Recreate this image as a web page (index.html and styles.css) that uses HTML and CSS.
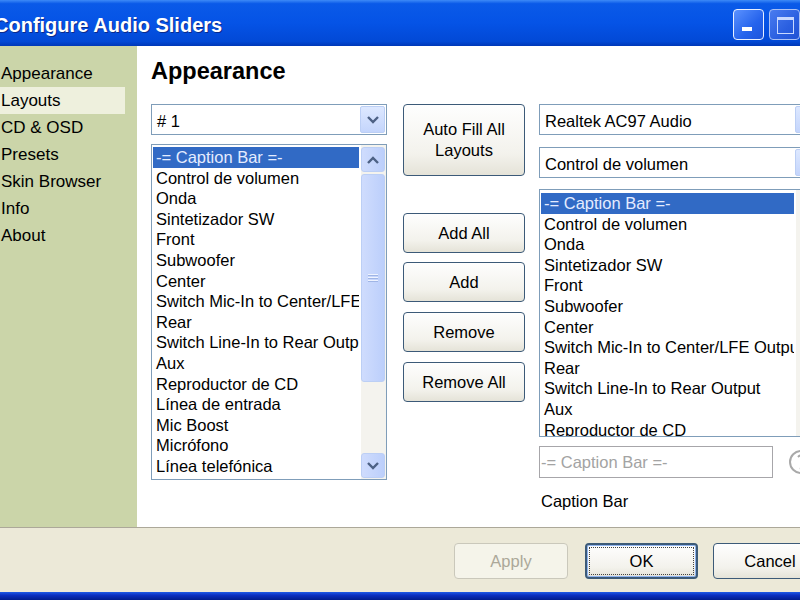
FILE: index.html
```html
<!DOCTYPE html>
<html lang="en">
<head>
    <meta charset="UTF-8">
    <title>Configure Audio Sliders</title>
    <link rel="stylesheet" href="styles.css">
</head>
<body>
    <div class="window">
        <div class="titlebar">
            <span class="title">Configure Audio Sliders</span>
            <div class="title-buttons">
                <span class="tb-btn tb-min"><span class="min-bar"></span></span>
                <span class="tb-btn tb-max"><span class="max-box"></span></span>
            </div>
        </div>

        <div class="main">
            <ul class="sidebar">
                <li>Appearance</li>
                <li class="active">Layouts</li>
                <li>CD &amp; OSD</li>
                <li>Presets</li>
                <li>Skin Browser</li>
                <li>Info</li>
                <li>About</li>
            </ul>

            <div class="content">
                <h1>Appearance</h1>

                <div class="columns">
                    <div class="col-left">
                        <div class="combo">
                            <span class="combo-text"># 1</span>
                            <span class="combo-btn">
                                <svg width="14" height="10" viewBox="0 0 14 10"><path d="M2 2 L7 7 L12 2" fill="none" stroke="#4d6185" stroke-width="2.4"/></svg>
                            </span>
                        </div>
                        <div class="listbox list-left">
                            <ul class="items">
                                <li class="selected">-= Caption Bar =-</li>
                                <li>Control de volumen</li>
                                <li>Onda</li>
                                <li>Sintetizador SW</li>
                                <li>Front</li>
                                <li>Subwoofer</li>
                                <li>Center</li>
                                <li>Switch Mic-In to Center/LFE Output</li>
                                <li>Rear</li>
                                <li>Switch Line-In to Rear Output</li>
                                <li>Aux</li>
                                <li>Reproductor de CD</li>
                                <li>Línea de entrada</li>
                                <li>Mic Boost</li>
                                <li>Micrófono</li>
                                <li>Línea telefónica</li>
                            </ul>
                            <div class="scrollbar">
                                <span class="sb-arrow">
                                    <svg width="14" height="10" viewBox="0 0 14 10"><path d="M2 8 L7 3 L12 8" fill="none" stroke="#4d6185" stroke-width="2.4"/></svg>
                                </span>
                                <span class="sb-thumb"><span class="grip"></span></span>
                                <span class="sb-track"></span>
                                <span class="sb-arrow">
                                    <svg width="14" height="10" viewBox="0 0 14 10"><path d="M2 2 L7 7 L12 2" fill="none" stroke="#4d6185" stroke-width="2.4"/></svg>
                                </span>
                            </div>
                        </div>
                    </div>

                    <div class="col-mid">
                        <button class="btn btn-tall">Auto Fill All<br>Layouts</button>
                        <button class="btn btn-add-all">Add All</button>
                        <button class="btn">Add</button>
                        <button class="btn">Remove</button>
                        <button class="btn">Remove All</button>
                    </div>

                    <div class="col-right">
                        <div class="combo">
                            <span class="combo-text">Realtek AC97 Audio</span>
                            <span class="combo-btn"></span>
                        </div>
                        <div class="combo combo-second">
                            <span class="combo-text">Control de volumen</span>
                            <span class="combo-btn"></span>
                        </div>
                        <div class="listbox list-right">
                            <ul class="items">
                                <li class="selected">-= Caption Bar =-</li>
                                <li>Control de volumen</li>
                                <li>Onda</li>
                                <li>Sintetizador SW</li>
                                <li>Front</li>
                                <li>Subwoofer</li>
                                <li>Center</li>
                                <li>Switch Mic-In to Center/LFE Output</li>
                                <li>Rear</li>
                                <li>Switch Line-In to Rear Output</li>
                                <li>Aux</li>
                                <li>Reproductor de CD</li>
                            </ul>
                            <div class="scrollbar"></div>
                        </div>
                        <div class="caption-row">
                            <div class="caption-input">-= Caption Bar =-</div>
                            <svg class="caption-icon" width="26" height="26" viewBox="0 0 26 26">
                                <circle cx="13" cy="13" r="11" fill="none" stroke="#a9a9a9" stroke-width="2"/>
                                <path d="M10 8 Q13 5 16 8 Q17 11 13 13 L13 16" fill="none" stroke="#a9a9a9" stroke-width="2"/>
                                <circle cx="13" cy="19.5" r="1.3" fill="#a9a9a9"/>
                            </svg>
                        </div>
                        <p class="caption-label">Caption Bar</p>
                    </div>
                </div>
            </div>
        </div>

        <div class="footer">
            <button class="btn btn-foot" disabled>Apply</button>
            <button class="btn btn-foot btn-default"><span class="focus">OK</span></button>
            <button class="btn btn-foot">Cancel</button>
        </div>
        <div class="bottom-edge"></div>
    </div>
</body>
</html>
```

FILE: styles.css
```css
body {
    margin: 0;
    width: 800px;
    height: 600px;
    overflow: hidden;
    font-family: "Liberation Sans", Arial, sans-serif;
    font-size: 16.5px;
    color: #000;
}

.window {
    width: 840px;
    height: 600px;
    display: flex;
    flex-direction: column;
    background: #ece9d8;
}

/* title bar */
.titlebar {
    height: 46px;
    flex-shrink: 0;
    display: flex;
    align-items: center;
    justify-content: space-between;
    background: linear-gradient(#3d8af7 0%, #0a5ae8 8%, #0553e6 50%, #0249d6 90%, #0038b8 100%);
    box-sizing: border-box;
    padding-top: 4px;
}

.title {
    font-weight: bold;
    font-size: 20px;
    color: #fff;
    margin-left: -6px;
    text-shadow: 1px 1px 0 #0a2a8a;
}

.title-buttons {
    display: flex;
    gap: 5px;
    margin-right: 40px;
    margin-top: -2px;
}

.tb-btn {
    width: 31px;
    height: 31px;
    box-sizing: border-box;
    border: 1px solid #e8efff;
    border-radius: 4px;
    background: linear-gradient(135deg, #5b92ff, #2563ec 60%, #1d55dc);
    position: relative;
}

.tb-max {
    background: linear-gradient(135deg, #4a7cf0, #2a5fe0 60%, #2152d4);
    border-color: #a9c0f5;
}

.min-bar {
    position: absolute;
    left: 8px;
    bottom: 8px;
    width: 10px;
    height: 4px;
    background: #fff;
}

.max-box {
    position: absolute;
    left: 7px;
    top: 7px;
    width: 15px;
    height: 13px;
    border: 1px solid #c8d8ff;
    border-top-width: 3px;
}

/* sidebar + content */
.main {
    display: flex;
    height: 481px;
    flex-shrink: 0;
}

.sidebar {
    width: 137px;
    flex-shrink: 0;
    margin: 0;
    padding: 14px 0 0 0;
    list-style: none;
    background: #cbd5a9;
    font-size: 17px;
}

.sidebar li {
    width: 125px;
    height: 27px;
    line-height: 27px;
    padding-left: 1px;
    box-sizing: border-box;
}

.sidebar li.active {
    background: #eef0dd;
}

.content {
    flex: 1;
    background: #fff;
    padding: 10px 0 0 14px;
}

h1 {
    margin: 0 0 18px 0;
    font-size: 23.5px;
    line-height: 30px;
    font-weight: bold;
}

.columns {
    display: flex;
    align-items: flex-start;
}

.col-left {
    width: 236px;
    margin-right: 16px;
}

.col-mid {
    width: 122px;
    margin-right: 14px;
    display: flex;
    flex-direction: column;
    gap: 10px;
}

.col-right {
    width: 283px;
}

/* combo boxes */
.combo {
    height: 31px;
    box-sizing: border-box;
    border: 1px solid #7f9db9;
    display: flex;
    align-items: center;
    justify-content: space-between;
    padding: 0 1px 0 5px;
    background: #fff;
}

.combo-text {
    padding-top: 3px;
}

.combo-second {
    margin-top: 12px;
}

.combo-btn {
    width: 25px;
    height: 27px;
    box-sizing: border-box;
    border: 1px solid #bccff5;
    border-radius: 2px;
    background: linear-gradient(#dde8ff, #c4d5fc);
    display: flex;
    align-items: center;
    justify-content: center;
}

/* list boxes */
.listbox {
    display: flex;
    border: 1px solid #7f9db9;
    box-sizing: border-box;
    background: #fff;
    overflow: hidden;
}

.list-left {
    height: 336px;
    margin-top: 9px;
}

.list-right {
    height: 248px;
    margin-top: 11px;
}

.items {
    flex: 1;
    min-width: 0;
    margin: 0;
    padding: 2px 2px 0 1px;
    list-style: none;
    overflow: hidden;
}

.items li {
    height: 20.6px;
    line-height: 20.6px;
    padding-left: 3px;
    white-space: nowrap;
    overflow: hidden;
}

.items li.selected {
    background: #316ac5;
    color: #e4ecff;
}

.list-right .items {
    padding-top: 3px;
}

.scrollbar {
    width: 25px;
    flex-shrink: 0;
    display: flex;
    flex-direction: column;
    background: #f4f3ee;
    padding: 2px 1px 1px 0;
    box-sizing: border-box;
}

.sb-arrow,
.sb-thumb {
    box-sizing: border-box;
    border: 1px solid #bccff5;
    border-radius: 3px;
    background: linear-gradient(90deg, #cfdcfd, #bccffb);
    display: flex;
    align-items: center;
    justify-content: center;
}

.sb-arrow {
    height: 25px;
}

.sb-thumb {
    height: 208px;
    margin-top: 2px;
}

.sb-track {
    flex: 1;
}

.grip {
    width: 10px;
    height: 9px;
    background: repeating-linear-gradient(#eef3ff 0 1px, #9fb5e6 1px 2px, transparent 2px 3px);
}

/* push buttons */
.btn {
    font-family: inherit;
    font-size: 16.5px;
    color: #000;
    height: 40px;
    border: 1px solid #3c5a78;
    border-radius: 4px;
    background: linear-gradient(#fefefe, #f3f2ec 70%, #e5e3d8);
    padding: 0;
}

.btn-tall {
    height: 72px;
    line-height: 21px;
    margin-bottom: 27px;
}

.col-mid .btn:nth-child(3) {
    margin-top: -1px;
}

/* caption editor */
.caption-row {
    display: flex;
    align-items: center;
    gap: 15px;
    margin-top: 9px;
}

.caption-input {
    width: 234px;
    height: 32px;
    box-sizing: border-box;
    border: 1px solid #a7a6aa;
    padding-left: 1px;
    line-height: 30px;
    color: #a3a3a3;
}

.caption-label {
    margin: 14px 0 0 2px;
}

/* footer */
.footer {
    height: 65px;
    flex-shrink: 0;
    box-sizing: border-box;
    border-top: 1px solid #aca899;
    padding: 15px 0 0 454px;
    display: flex;
    align-items: flex-start;
}

.btn-foot {
    width: 114px;
    height: 36px;
}

.btn-foot[disabled] {
    border-color: #cac8bb;
    color: #aca899;
    background: #f5f4ea;
}

.btn-default {
    width: 113px;
    margin-left: 17px;
    margin-right: 15px;
    border: 2px solid #3c5a78;
    box-shadow: inset 0 0 0 1px #8fb4ef;
    padding: 2px;
}

.focus {
    display: flex;
    align-items: center;
    justify-content: center;
    height: 100%;
    border: 1px dotted #444;
    box-sizing: border-box;
}

.bottom-edge {
    height: 8px;
    background: linear-gradient(#1e5ae6, #0a2fc0 40%, #001c8c);
}
```
